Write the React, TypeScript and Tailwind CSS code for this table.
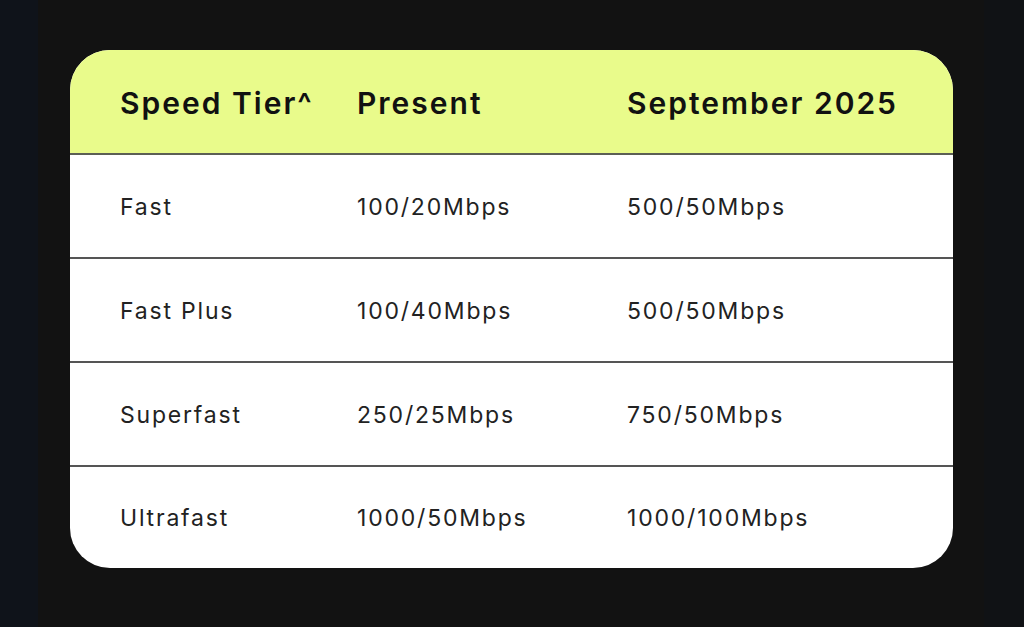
import React from 'react';

const rows = [
  { tier: "Fast", present: "100/20Mbps", next: "500/50Mbps" },
  { tier: "Fast Plus", present: "100/40Mbps", next: "500/50Mbps" },
  { tier: "Superfast", present: "250/25Mbps", next: "750/50Mbps" },
  { tier: "Ultrafast", present: "1000/50Mbps", next: "1000/100Mbps" },
];

const App: React.FC = () => {
  return (
    <div className="flex h-[627px] w-full bg-[#121212]" style={{ fontFamily: 'Inter, "Liberation Sans", sans-serif' }}>
      <div className="w-[38px] bg-[#0f131a]"></div>
      <div className="flex-1 pl-[32px] pr-[31px] pt-[50px]">
        <div className="overflow-hidden rounded-[40px] bg-white">
          <div className="grid h-[105px] grid-cols-[237px_270px_1fr] items-center border-b-2 border-[#5c5f55] bg-[#e9fb8b] pl-[50px] pt-[3px] text-[30px] font-semibold tracking-[2px] text-[#111]">
            <div>Speed Tier^</div>
            <div>Present</div>
            <div>September 2025</div>
          </div>
          {rows.map((row, idx) => (
            <div
              key={idx}
              className={
                "grid grid-cols-[237px_270px_1fr] items-center pl-[50px] pt-[2px] text-[23px] tracking-[1.8px] text-[#222] " +
                (idx < rows.length - 1 ? "h-[104px] border-b-2 border-[#555]" : "h-[101px]")
              }
            >
              <div>{row.tier}</div>
              <div>{row.present}</div>
              <div>{row.next}</div>
            </div>
          ))}
        </div>
      </div>
      <div className="w-[40px] bg-[#101215]"></div>
    </div>
  );
};

export default App;
